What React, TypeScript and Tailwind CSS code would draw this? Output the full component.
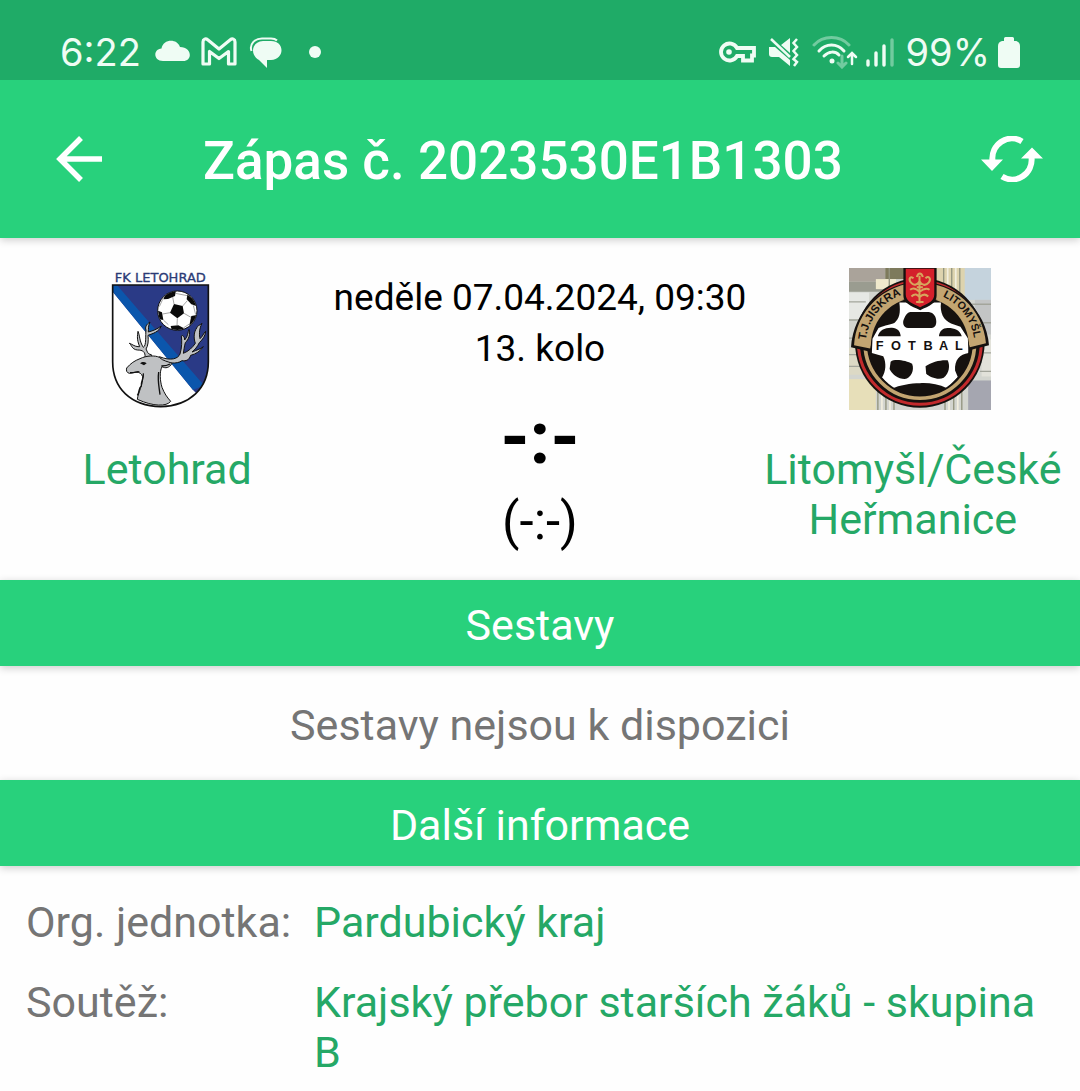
import React from 'react';

interface BandProps {
  title: string;
}

interface InfoRow {
  label: string;
  value: string;
}

const infoRows: InfoRow[] = [
  { label: 'Org. jednotka:', value: 'Pardubický kraj' },
  { label: 'Soutěž:', value: 'Krajský přebor starších žáků - skupina B' },
];

const LetohradCrest = () => (
  <svg viewBox="0 24 360 426" className="h-[142px] w-[120px]" role="img" aria-label="FK Letohrad">
    <defs>
      <clipPath id="shield">
        <path d="M38 75H325V305C325 385 270 437 182 440C92 437 38 385 38 305Z" />
      </clipPath>
      <clipPath id="smallBall">
        <circle cx="232" cy="152" r="58" />
      </clipPath>
    </defs>
    <text x="181" y="65" textAnchor="middle" fontSize="39" fill="#2b3a75" stroke="#2b3a75" strokeWidth="1" className="font-['DejaVu_Sans',sans-serif]">
      FK LETOHRAD
    </text>
    <g clipPath="url(#shield)">
      <rect x="30" y="70" width="300" height="375" fill="#fff" />
      <path d="M38 75H330V440L279 390L38 95Z" fill="#2a3a86" />
      <path d="M36 74H50L124 160L312 376L279 390L36 92Z" fill="#0b56ac" />
    </g>
    <circle cx="232" cy="152" r="59" fill="#fff" stroke="#111" strokeWidth="3" />
    <g clipPath="url(#smallBall)">
      <g fill="#0a0a0a">
        <path d="M222 132L248 138L252 160L232 175L210 158Z" />
        <path d="M198 100L228 90L225 108L204 117L190 118Z" />
        <path d="M262 103L282 120L290 138L274 133L260 118Z" />
        <path d="M274 168L292 165L284 188L268 196Z" />
        <path d="M212 198L235 196L252 205L240 214L215 210Z" />
        <path d="M174 152L186 157L190 180L178 178Z" />
      </g>
      <path d="M222 132L218 111M248 138L262 122M252 160L273 172M232 175L231 197M210 158L188 162M188 118L178 140M190 180L205 194M268 192L250 204M280 136L287 164M226 100L262 107" fill="none" stroke="#777" strokeWidth="2" />
    </g>
    <g fill="#bfc1c3" stroke="#111" strokeWidth="3" strokeLinejoin="round">
      <path d="M135 293C137 275 128 270 112 270C94 268 94 252 88 250C96 252 102 259 114 260L119 260C110 238 112 228 114 214C120 228 118 244 130 262C140 257 136 224 138 210C134 202 140 192 150 186C144 198 146 206 145 216C160 212 170 208 184 198C176 216 160 220 144 226C146 242 144 258 138 267C143 276 142 282 154 284V293Z" />
      <path d="M178 290C214 304 234 296 240 282C246 262 246 244 244 228C246 224 254 228 254 240C264 230 264 214 267 208C272 222 266 238 256 248C252 262 252 270 250 280C266 274 278 262 286 250C280 232 282 216 290 204C292 196 300 196 306 190C296 208 298 228 300 236C308 230 310 220 317 214C316 228 308 238 298 248C292 260 284 270 276 276C290 270 300 268 310 260C300 274 288 282 272 286C268 300 258 304 246 302C230 314 202 308 184 304Z" />
      <path d="M80 324C92 310 104 302 120 296C140 286 166 286 178 292C190 304 204 304 216 310C208 324 196 326 186 320C178 336 180 362 186 382C194 402 200 410 212 424C200 440 160 440 112 418C114 398 130 372 128 350C120 330 104 338 88 340C80 338 78 332 80 324Z" />
    </g>
    <path d="M120 310C128 304 134 306 140 310L132 316Z" fill="#111" />
    <path d="M90 338C104 340 112 332 118 336M130 340C132 358 122 362 124 378C114 384 120 396 112 406M184 318C196 318 204 316 210 312M176 336C172 364 178 384 180 404" fill="none" stroke="#111" strokeWidth="4" />
    <path d="M38 75H325V305C325 385 270 437 182 440C92 437 38 385 38 305Z" fill="none" stroke="#111" strokeWidth="5" />
  </svg>
);

const LitomyslCrest = () => (
  <svg viewBox="30 27 423 423" className="size-[142px]" role="img" aria-label="T.J. Jiskra Litomyšl">
    <defs>
      <clipPath id="bigBall">
        <circle cx="241" cy="260" r="146" />
      </clipPath>
      <path id="arcLeft" d="M80 246A162 162 0 0 1 190 106" />
      <path id="arcRight" d="M296 107A162 162 0 0 1 404 250" />
    </defs>
    <rect x="30" y="27" width="423" height="423" fill="#d3d5cf" />
    <path d="M30 27H138V68H30Z" fill="#aaa39a" />
    <path d="M138 27H200V60H138Z" fill="#7d7a5c" />
    <path d="M30 68H160V98H30Z" fill="#9a9c90" />
    <path d="M110 60H170V90H110Z" fill="#efe9cc" />
    <path d="M290 27H375V120H290Z" fill="#ddd3ae" />
    <path d="M375 27H453V122H375Z" fill="#c5d3dd" />
    <path d="M30 100H90V180H30Z" fill="#e6e8e4" />
    <path d="M30 265H90V345H30Z" fill="#dcd9c5" />
    <path d="M30 358H110V450H30Z" fill="#e7dfb9" />
    <path d="M385 362H453V450H385Z" fill="#a5a6b0" />
    <path d="M405 122H453V225H405Z" fill="#c3c5c5" />
    <path d="M425 240H453V350H425Z" fill="#e2e2da" />
    <path d="M30 128H80M30 182H66M30 236H44M30 285H60M30 320H66M395 135H453M415 190H453M432 280H453M420 335H453" stroke="#a3a59b" strokeWidth="4" />
    <path d="M150 27V90M312 27V80M336 27V95M360 27V100M116 375V450M140 390V450M164 400V450M316 410V450M342 395V450M366 370V450" stroke="#93957f" strokeWidth="4" />
    <path d="M324 27V80M348 27V100M128 375V450M152 390V450M328 400V450M354 380V450" stroke="#f2efdf" strokeWidth="5" />

    <circle cx="241" cy="250" r="193" fill="#15110f" />
    <circle cx="241" cy="250" r="183" fill="none" stroke="#c22a2c" strokeWidth="9" />
    <circle cx="241" cy="252" r="163" fill="none" stroke="#c3a571" strokeWidth="11" />
    <path d="M36 263A206 206 0 0 1 447 257L388 272A148 148 0 0 0 96 277Z" fill="#15110f" />
    <path d="M45 257A197 197 0 0 1 438 251L390 263A151 151 0 0 0 93 267Z" fill="#c3a571" />
    <circle cx="241" cy="260" r="146" fill="#15110f" />
    <g clipPath="url(#bigBall)">
      <path d="M100 238L118 206C138 196 154 196 166 190C180 178 184 162 180 130H304C300 160 312 184 334 192L362 202L384 236L386 280C360 284 344 300 346 332L354 352L322 385C296 372 264 368 241 370C214 370 180 376 158 386L128 354C140 336 142 310 132 290L98 280Z" fill="#fff" />
      <path d="M212 158H268C282 160 290 172 290 186C290 200 284 206 272 206H206C192 204 188 190 194 178C198 168 204 160 212 158Z" fill="#15110f" />
      <path d="M116 230C120 212 138 204 158 205C174 206 182 214 184 230Z" fill="#15110f" />
      <path d="M298 230C300 214 310 205 326 206C344 206 360 212 366 230Z" fill="#15110f" />
      <path d="M154 306C168 296 202 304 218 312C226 332 214 354 196 358C176 358 158 344 151 328Z" fill="#15110f" />
      <path d="M258 320C276 306 306 300 324 302C332 318 328 342 312 354C296 362 270 352 260 342Z" fill="#15110f" />
    </g>
    <path d="M192 27H291V110C291 132 270 140 242 153C214 140 192 132 192 110Z" fill="#15110f" />
    <path d="M199 29H284V106C284 126 266 132 242 144C218 132 199 126 199 106Z" fill="#d4202b" />
    <path d="M240 50V132M222 58C214 48 206 60 214 70C224 82 236 76 240 66C246 78 258 82 268 70C276 58 266 48 258 58M232 54C236 40 246 40 250 54M212 92C222 84 232 90 240 98C250 90 260 84 270 92M216 112C226 102 234 106 240 114C248 106 256 102 266 112M232 84H250M230 128H252" fill="none" stroke="#d7a55d" strokeWidth="6" />
    <g fontSize="34" fontWeight="700" fill="#15110f" className="font-['Liberation_Sans',Arial,sans-serif]">
      <text>
        <textPath href="#arcLeft" startOffset="50%" textAnchor="middle">T.J.JISKRA</textPath>
      </text>
      <text fontSize="32">
        <textPath href="#arcRight" startOffset="50%" textAnchor="middle">LITOMYŠL</textPath>
      </text>
      <text x="110 155 206 252 298 346" y="272" fontSize="38">FOTBAL</text>
    </g>
  </svg>
);

const StatusBar = () => (
  <div className="relative z-10 flex h-20 items-center justify-between bg-[#1fab67] px-[60px] pt-6 text-[#effcf4]">
    <div className="flex items-center">
      <span className="w-[95px] font-['Inter',sans-serif] text-[38px] leading-10">6:22</span>
      <svg viewBox="0 0 36 32" className="h-8 w-9" fill="currentColor" aria-hidden="true">
        <path d="M8 25C-2 25-2 13 6.500 12.500C8 3 22 2 25 11C37 11 38 25 28 25Z" />
      </svg>
      <svg viewBox="0 0 36 32" className="ml-[10px] h-8 w-9" fill="none" stroke="currentColor" strokeWidth="3.200" strokeLinejoin="round" aria-hidden="true">
        <path d="M2 28V6C2 3 4.500 2 7 4L18 13L29 4C31.500 2 34 3 34 6V28H27.500V15.500L18 22.500L8.500 15.500V28Z" />
      </svg>
      <svg viewBox="0 0 34 32" className="ml-3 h-8 w-[34px]" fill="currentColor" aria-hidden="true">
        <path d="M14 5H22C36 5 36 23 22 24H18V32L10 24C1 19 2 6 14 5Z" />
        <path d="M2.500 15C0 8 6 2.500 13 2.500H22C25 2.500 27 3.500 28 4.500" fill="none" stroke="currentColor" strokeWidth="2" />
      </svg>
      <span className="ml-[26px] size-3 rounded-full bg-current" />
    </div>
    <div className="flex items-center">
      <svg viewBox="0 0 38 32" className="h-8 w-[38px]" fill="none" stroke="currentColor" strokeWidth="3.800" aria-hidden="true">
        <path d="M19 12A8.500 8.500 0 1 0 19 20H25V24.500H34V19.500H36V12Z" />
        <circle cx="11" cy="16" r="2.800" fill="currentColor" stroke="none" />
      </svg>
      <svg viewBox="0 0 32 32" className="ml-3 h-8 w-8" aria-hidden="true">
        <path d="M1 11H7L22 24V30L11 21H4C2 21 1 20 1 18ZM13 9L22 2V17Z" fill="currentColor" />
        <path d="M3 3L22 21" stroke="currentColor" strokeWidth="2.500" />
        <path d="M29 3L25.500 7L29 11L25.500 15L29 19L25.500 23L29 26L26 30" fill="none" stroke="currentColor" strokeWidth="2.500" />
      </svg>
      <svg viewBox="0 0 46 34" className="ml-3 h-[34px] w-[46px]" fill="none" stroke="currentColor" strokeWidth="3" strokeLinecap="round" aria-hidden="true">
        <path d="M2 10C11 0 28 0 37 10" opacity=".4" />
        <path d="M7 16C14 8 25 8 32 16M12 21C17 16 23 16 27 20" />
        <circle cx="20" cy="26" r="2.500" fill="currentColor" stroke="none" />
        <path d="M30 21V31M26 28L30 32L34 28" opacity=".4" />
        <path d="M40 29V19M36 22L40 18L44 22" strokeWidth="2.500" />
      </svg>
      <svg viewBox="0 0 28 32" className="ml-2 h-8 w-7" stroke="currentColor" strokeWidth="3.400" strokeLinecap="round" aria-hidden="true">
        <path d="M2 25V29M10 17V29M18 10V29" />
        <path d="M26 4V29" opacity=".4" />
      </svg>
      <span className="ml-3 font-['Inter',sans-serif] text-[38px] leading-10">99%</span>
      <svg viewBox="0 0 22 32" className="ml-2 h-8 w-[22px]" fill="currentColor" aria-hidden="true">
        <path d="M6 2.500Q6 1 7.500 1H14.500Q16 1 16 2.500V5H18Q22 6 22 10V29Q22 32 19 32H3Q0 32 0 29V10Q0 6 4 5H6Z" />
      </svg>
    </div>
  </div>
);

const AppBar = () => (
  <header className="relative flex h-[158px] items-center bg-[#28d17c] pr-[37px] pl-14 text-white shadow-[0_2px_8px_rgba(0,0,0,0.2)]">
    <button type="button" aria-label="Zpět" className="shrink-0">
      <svg viewBox="0 0 46 46" className="size-[46px]" fill="none" stroke="currentColor" strokeWidth="5.500" aria-hidden="true">
        <path d="M46 23H5M25 2L4 23L25 44" />
      </svg>
    </button>
    <h1 className="ml-[101px] flex-1 pt-1 text-[53px] leading-[60px] font-medium whitespace-nowrap">Zápas č. 2023530E1B1303</h1>
    <button type="button" aria-label="Obnovit" className="shrink-0">
      <svg viewBox="0 0 62 46" className="h-[46px] w-[62px]" fill="none" aria-hidden="true">
        <path d="M11.500 25A19.500 20 0 0 1 41 5.500M50.500 21A19.500 20 0 0 1 21 40.500" stroke="currentColor" strokeWidth="6" />
        <path d="M0 23.500H22L11 35ZM40 22.500H62L51 11.500Z" fill="currentColor" />
      </svg>
    </button>
  </header>
);

const SectionBand: React.FC<BandProps> = ({ title }) => (
  <h2 className="relative bg-[#28d17c] pt-5 pb-4 text-center text-[43px] leading-[50px] text-white shadow-[0_2px_8px_rgba(0,0,0,0.2)]">
    {title}
  </h2>
);

const MatchSummary = () => (
  <section className="pt-[30px] pb-[33px] text-center">
    <div className="grid grid-cols-[8fr_11fr_8fr]">
      <div className="flex justify-center">
        <LetohradCrest />
      </div>
      <div className="pt-1 text-[37px] leading-[51px] text-black">
        <p className="whitespace-nowrap">neděle 07.04.2024, 09:30</p>
        <p>13. kolo</p>
      </div>
      <div className="flex justify-center">
        <LitomyslCrest />
      </div>
    </div>
    <div className="grid grid-cols-[13fr_16fr_13fr] text-[43px] leading-[50px]">
      <a href="#letohrad" className="pt-[34px] text-[#25a866]">Letohrad</a>
      <div className="text-black">
        <p className="text-[74px] leading-[56px] font-bold">-:-</p>
        <p className="mt-[31px] text-[51px] leading-[50px]">(-:-)</p>
      </div>
      <a href="#litomysl" className="pt-[34px] text-[#25a866]">Litomyšl/České Heřmanice</a>
    </div>
  </section>
);

const App = () => (
  <div className="bg-[#fefefe] font-['Roboto',sans-serif]">
    <StatusBar />
    <AppBar />
    <main>
      <MatchSummary />
      <SectionBand title="Sestavy" />
      <p className="pt-[34px] pb-[30px] text-center text-[43px] leading-[50px] text-[#757575]">Sestavy nejsou k dispozici</p>
      <SectionBand title="Další informace" />
      <dl className="grid grid-cols-[288px_1fr] gap-y-[30px] px-[26px] pt-[31px] pb-[15px] text-[43px] leading-[50px]">
        {infoRows.map((row) => (
          <React.Fragment key={row.label}>
            <dt className="whitespace-nowrap text-[#757575]">{row.label}</dt>
            <dd>
              <a href="#info" className="text-[#25a866]">{row.value}</a>
            </dd>
          </React.Fragment>
        ))}
      </dl>
    </main>
  </div>
);

export default App;
